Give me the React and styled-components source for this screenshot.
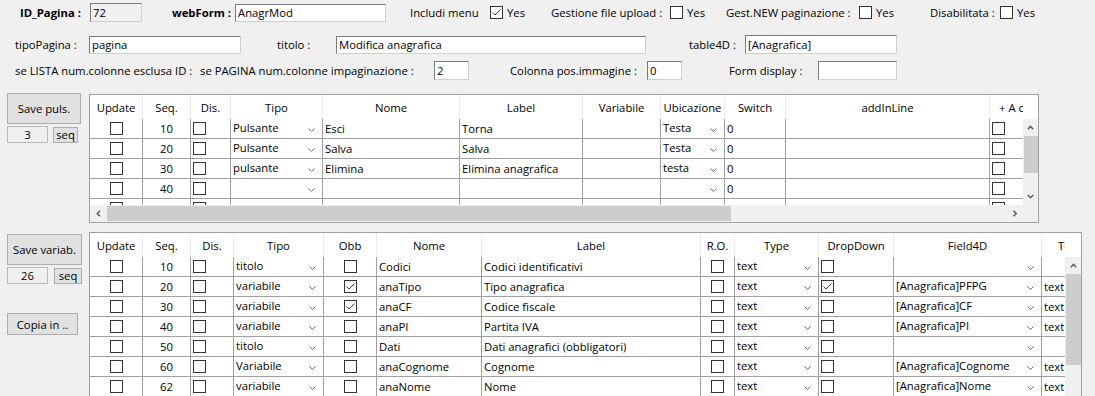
import React from 'react';
import styled, { createGlobalStyle } from 'styled-components';

const GlobalStyle = createGlobalStyle`
  html, body {
    margin: 0;
    padding: 0;
    background: #f0f0f0;
    overflow: hidden;
  }
  body {
    font-family: "Open Sans", "Noto Sans", sans-serif;
    font-size: 11.3px;
    color: #000;
  }
`;

const Page = styled.div`
  width: 1095px;
  height: 396px;
  overflow: hidden;
  padding-top: 3px;
  box-sizing: border-box;
`;

const FormRow = styled.div`
  display: flex;
  align-items: center;
  height: 19px;
  margin-top: ${({ $mt }) => $mt || 0}px;
  padding-left: ${({ $pl }) => $pl}px;
`;

const Group = styled.div`
  display: flex;
  align-items: center;
  flex: none;
  width: ${({ $w }) => ($w ? `${$w}px` : 'auto')};
`;

const Label = styled.span`
  flex: none;
  width: ${({ $w }) => $w}px;
  font-weight: ${({ $bold }) => ($bold ? 700 : 400)};
  white-space: nowrap;
`;

const Input = styled.div`
  flex: none;
  width: ${({ $w }) => $w}px;
  height: ${({ $h }) => $h || 19}px;
  box-sizing: border-box;
  border: 1px solid;
  border-color: #7a7a7a #cfcfcf #cfcfcf #7a7a7a;
  background: ${({ $disabled }) => ($disabled ? '#f0f0f0' : '#fff')};
  padding: 0 2px;
  line-height: ${({ $h }) => ($h || 19) - 2}px;
  white-space: nowrap;
  overflow: hidden;
`;

const YesText = styled.span`
  margin-left: 4px;
`;

const CheckBox = styled.span`
  display: inline-flex;
  align-items: center;
  justify-content: center;
  flex: none;
  width: 13px;
  height: 13px;
  box-sizing: border-box;
  border: 1px solid #333;
  background: #fff;
`;

const Check = ({ on }) => (
  <CheckBox>
    {on && (
      <svg width="11" height="11" viewBox="0 0 11 11">
        <path d="M1.5 5.5 L4 8 L9.5 2.5" fill="none" stroke="#404040" strokeWidth="1" />
      </svg>
    )}
  </CheckBox>
);

const Section = styled.div`
  display: flex;
  align-items: flex-start;
  margin-top: ${({ $mt }) => $mt}px;
`;

const SidePanel = styled.div`
  width: 89px;
  flex: none;
  padding-left: 7px;
  box-sizing: border-box;
  display: flex;
  flex-direction: column;
  align-items: flex-start;
`;

const Button = styled.div`
  width: ${({ $w }) => $w}px;
  height: ${({ $h }) => $h}px;
  margin-top: ${({ $mt }) => $mt || 0}px;
  box-sizing: border-box;
  border: 1px solid #adadad;
  background: #e1e1e1;
  display: flex;
  align-items: center;
  justify-content: center;
  white-space: nowrap;
`;

const CounterRow = styled.div`
  display: flex;
  align-items: center;
  margin-top: 2px;
`;

const Counter = styled.div`
  width: 41px;
  height: 17px;
  box-sizing: border-box;
  border: 1px solid #b9b9b9;
  display: flex;
  align-items: center;
  justify-content: center;
`;

const SeqButton = styled(Button)`
  height: 16px;
  margin-left: ${({ $ml }) => $ml}px;
  line-height: 14px;
`;

/* ---------- grid ---------- */

const Frame = styled.div`
  flex: none;
  width: ${({ $w }) => $w}px;
  box-sizing: border-box;
  border: 1px solid #a0a0a0;
  background: #fff;
  overflow: hidden;
  display: flex;
  flex-direction: column;
`;

const HeadLine = styled.div`
  display: flex;
  height: 24px;
  background: #fff;
  flex: none;
`;

const Clip = styled.div`
  flex: none;
  width: ${({ $w }) => $w}px;
  overflow: hidden;
`;

const ColRow = styled.div`
  display: grid;
  grid-template-columns: ${({ $cols }) => $cols};
  width: max-content;
`;

const HeadCell = styled.div`
  height: 24px;
  box-sizing: border-box;
  border-right: 1px solid #ececec;
  display: flex;
  align-items: center;
  justify-content: center;
  white-space: nowrap;
  overflow: hidden;
`;

const Body = styled.div`
  display: flex;
  height: ${({ $h }) => $h}px;
  flex: none;
`;

const Cell = styled.div`
  height: 20px;
  box-sizing: border-box;
  border-right: 1px solid #a0a0a0;
  border-bottom: 1px solid #a0a0a0;
  display: flex;
  align-items: center;
  justify-content: ${({ $center }) => ($center ? 'center' : 'flex-start')};
  padding-left: ${({ $center }) => ($center ? 0 : 2)}px;
  white-space: nowrap;
  overflow: hidden;
  background: #fff;
`;

const SelectText = styled.span`
  flex: 1;
  overflow: hidden;
  margin-top: -2px;
`;

const ChevronSvg = styled.svg`
  flex: none;
  margin: 3px 7px 0 4px;
`;

const Chevron = () => (
  <ChevronSvg width="7" height="4" viewBox="0 0 7 4">
    <path d="M0.5 0.5 L3.5 3.5 L6.5 0.5" fill="none" stroke="#6e6e6e" strokeWidth="1" />
  </ChevronSvg>
);

const VScroll = styled.div`
  flex: none;
  width: ${({ $w }) => $w}px;
  background: #f0f0f0;
  display: flex;
  flex-direction: column;
`;

const ArrowBox = styled.div`
  flex: none;
  width: ${({ $w }) => $w}px;
  height: ${({ $h }) => $h}px;
  display: flex;
  align-items: center;
  justify-content: center;
`;

const VTrack = styled.div`
  flex: 1;
  display: flex;
  flex-direction: column;
`;

const VThumb = styled.div`
  height: ${({ $len }) => $len}px;
  margin-left: 1px;
  background: #cdcdcd;
`;

const HScroll = styled.div`
  display: flex;
  height: 17px;
  flex: none;
  background: #f0f0f0;
`;

const HTrack = styled.div`
  flex: 1;
  display: flex;
  align-items: center;
`;

const HThumb = styled.div`
  width: ${({ $len }) => $len}px;
  height: 15px;
  background: #cdcdcd;
`;

const Corner = styled.div`
  flex: none;
  width: ${({ $w }) => $w}px;
  background: #f0f0f0;
`;

const Arrow = ({ dir }) => {
  const d = {
    up: 'M0.8 4.2 L3.5 1.5 L6.2 4.2',
    down: 'M0.8 1 L3.5 3.7 L6.2 1',
    left: 'M4 0.8 L1.3 3.5 L4 6.2',
    right: 'M1.5 0.8 L4.2 3.5 L1.5 6.2',
  }[dir];
  const horiz = dir === 'left' || dir === 'right';
  return (
    <svg width={horiz ? 6 : 7} height={horiz ? 7 : 5} viewBox={horiz ? '0 0 6 7' : '0 0 7 5'}>
      <path d={d} fill="none" stroke="#606060" strokeWidth="1.6" />
    </svg>
  );
};

const renderCell = (col, value, i) => {
  switch (col.k) {
    case 'checkC':
      return (
        <Cell key={i} $center>
          <Check on={value} />
        </Cell>
      );
    case 'check':
      return (
        <Cell key={i}>
          <Check on={value} />
        </Cell>
      );
    case 'num':
      return (
        <Cell key={i} $center>
          {value}
        </Cell>
      );
    case 'select':
      return (
        <Cell key={i}>
          <SelectText>{value}</SelectText>
          <Chevron />
        </Cell>
      );
    default:
      return <Cell key={i}>{value}</Cell>;
  }
};

const DataGrid = ({ cols, rows, width, scrollW, bodyH, vThumb, hThumb }) => {
  const template = cols.map((c) => `${c.w}px`).join(' ');
  const visible = width - 2 - scrollW;
  return (
    <Frame $w={width}>
      <HeadLine>
        <Clip $w={visible}>
          <ColRow $cols={template}>
            {cols.map((c) => (
              <HeadCell key={c.t}>{c.t}</HeadCell>
            ))}
          </ColRow>
        </Clip>
      </HeadLine>
      <Body $h={bodyH}>
        <Clip $w={visible}>
          {rows.map((r, ri) => (
            <ColRow key={ri} $cols={template}>
              {cols.map((c, ci) => renderCell(c, r[ci], ci))}
            </ColRow>
          ))}
        </Clip>
        <VScroll $w={scrollW}>
          <ArrowBox $w={scrollW} $h={17}>
            <Arrow dir="up" />
          </ArrowBox>
          <VTrack>
            <VThumb $len={vThumb} />
          </VTrack>
          <ArrowBox $w={scrollW} $h={17}>
            <Arrow dir="down" />
          </ArrowBox>
        </VScroll>
      </Body>
      {hThumb && (
        <HScroll>
          <ArrowBox $w={17} $h={17}>
            <Arrow dir="left" />
          </ArrowBox>
          <HTrack>
            <HThumb $len={hThumb} />
          </HTrack>
          <ArrowBox $w={17} $h={17}>
            <Arrow dir="right" />
          </ArrowBox>
          <Corner $w={scrollW} />
        </HScroll>
      )}
    </Frame>
  );
};

const buttonCols = [
  { t: 'Update', w: 53, k: 'checkC' },
  { t: 'Seq.', w: 48, k: 'num' },
  { t: 'Dis.', w: 40, k: 'check' },
  { t: 'Tipo', w: 92, k: 'select' },
  { t: 'Nome', w: 137, k: 'text' },
  { t: 'Label', w: 123, k: 'text' },
  { t: 'Variabile', w: 78, k: 'text' },
  { t: 'Ubicazione', w: 64, k: 'select' },
  { t: 'Switch', w: 61, k: 'text' },
  { t: 'addInLine', w: 204, k: 'text' },
  { t: '+ A capo', w: 64, k: 'check' },
];

const buttonRows = [
  [false, '10', false, 'Pulsante', 'Esci', 'Torna', '', 'Testa', '0', '', false],
  [false, '20', false, 'Pulsante', 'Salva', 'Salva', '', 'Testa', '0', '', false],
  [false, '30', false, 'pulsante', 'Elimina', 'Elimina anagrafica', '', 'testa', '0', '', false],
  [false, '40', false, '', '', '', '', '', '0', '', false],
  [false, '', false, '', '', '', '', '', '', '', false],
];

const varCols = [
  { t: 'Update', w: 53, k: 'checkC' },
  { t: 'Seq.', w: 48, k: 'num' },
  { t: 'Dis.', w: 43, k: 'check' },
  { t: 'Tipo', w: 90, k: 'select' },
  { t: 'Obb', w: 53, k: 'checkC' },
  { t: 'Nome', w: 105, k: 'text' },
  { t: 'Label', w: 219, k: 'text' },
  { t: 'R.O.', w: 34, k: 'checkC' },
  { t: 'Type', w: 84, k: 'select' },
  { t: 'DropDown', w: 75, k: 'check' },
  { t: 'Field4D', w: 148, k: 'select' },
  { t: 'Testo', w: 62, k: 'text' },
];

const varRows = [
  [false, '10', false, 'titolo', false, 'Codici', 'Codici identificativi', false, 'text', false, '', ''],
  [false, '20', false, 'variabile', true, 'anaTipo', 'Tipo anagrafica', false, 'text', true, '[Anagrafica]PFPG', 'text'],
  [false, '30', false, 'variabile', true, 'anaCF', 'Codice fiscale', false, 'text', false, '[Anagrafica]CF', 'text'],
  [false, '40', false, 'variabile', false, 'anaPI', 'Partita IVA', false, 'text', false, '[Anagrafica]PI', 'text'],
  [false, '50', false, 'titolo', false, 'Dati', 'Dati anagrafici (obbligatori)', false, 'text', false, '', ''],
  [false, '60', false, 'Variabile', false, 'anaCognome', 'Cognome', false, 'text', false, '[Anagrafica]Cognome', 'text'],
  [false, '62', false, 'variabile', false, 'anaNome', 'Nome', false, 'text', false, '[Anagrafica]Nome', 'text'],
  [false, '70', false, 'variabile', false, 'anaIndirizzo', 'Indirizzo', false, 'text', false, '[Anagrafica]Indirizzo', 'text'],
];

const CheckYes = ({ label, w, lw, on }) => (
  <Group $w={w}>
    <Label $w={lw}>{label}</Label>
    <Check on={on} />
    <YesText>Yes</YesText>
  </Group>
);

const App = () => (
  <Page>
    <GlobalStyle />
    <FormRow $pl={20}>
      <Group $w={152}>
        <Label $w={70} $bold>ID_Pagina :</Label>
        <Input $w={52} $disabled>72</Input>
      </Group>
      <Group $w={238}>
        <Label $w={63} $bold>webForm :</Label>
        <Input $w={151} $h={18}>AnagrMod</Input>
      </Group>
      <CheckYes label="Includi menu" w={141} lw={80} on />
      <CheckYes label="Gestione file upload :" w={175} lw={119} />
      <CheckYes label="Gest.NEW paginazione :" w={204} lw={133} />
      <CheckYes label="Disabilitata :" lw={70} />
    </FormRow>

    <FormRow $pl={15} $mt={13}>
      <Group $w={262}>
        <Label $w={74}>tipoPagina :</Label>
        <Input $w={152} $h={18}>pagina</Input>
      </Group>
      <Group $w={412}>
        <Label $w={59}>titolo :</Label>
        <Input $w={310} $h={18}>Modifica anagrafica</Input>
      </Group>
      <Group>
        <Label $w={56}>table4D :</Label>
        <Input $w={152}>[Anagrafica]</Input>
      </Group>
    </FormRow>

    <FormRow $pl={15} $mt={7}>
      <Group $w={495}>
        <Label $w={185}>se LISTA num.colonne esclusa ID :</Label>
        <Label $w={234}>se PAGINA num.colonne impaginazione :</Label>
        <Input $w={35}>2</Input>
      </Group>
      <Group $w={219}>
        <Label $w={137}>Colonna pos.immagine :</Label>
        <Input $w={35}>0</Input>
      </Group>
      <Group>
        <Label $w={89}>Form display :</Label>
        <Input $w={79} />
      </Group>
    </FormRow>

    <Section $mt={14}>
      <SidePanel>
        <Button $w={74} $h={31} $mt={-1}>Save puls.</Button>
        <CounterRow>
          <Counter>3</Counter>
          <SeqButton $w={25} $ml={5}>seq</SeqButton>
        </CounterRow>
      </SidePanel>
      <DataGrid
        cols={buttonCols}
        rows={buttonRows}
        width={950}
        scrollW={15}
        bodyH={86}
        vThumb={37}
        hThumb={624}
      />
    </Section>

    <Section $mt={9}>
      <SidePanel>
        <Button $w={75} $h={31} $mt={2}>Save variab.</Button>
        <CounterRow>
          <Counter>26</Counter>
          <SeqButton $w={28} $ml={6}>seq</SeqButton>
        </CounterRow>
        <Button $w={71} $h={22} $mt={29}>Copia in ..</Button>
      </SidePanel>
      <DataGrid
        cols={varCols}
        rows={varRows}
        width={993}
        scrollW={16}
        bodyH={160}
        vThumb={91}
      />
    </Section>
  </Page>
);

export default App;
